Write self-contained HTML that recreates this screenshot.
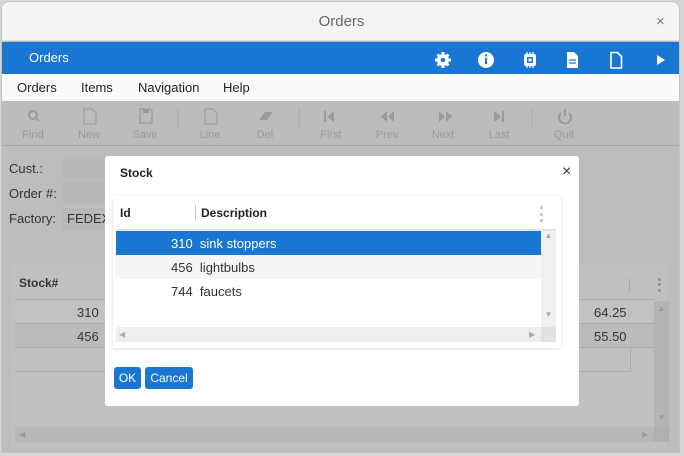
<!DOCTYPE html>
<html><head><style>
*{box-sizing:border-box;margin:0;padding:0}
body{width:684px;height:456px;background:#d6d6d6;font-family:"Liberation Sans",sans-serif;position:relative;overflow:hidden}
.a{position:absolute}
.win{left:1px;top:1px;width:679px;height:452px;border:1px solid #c4c4c4;border-radius:8px 8px 0 0;overflow:hidden;background:#bdbdbd}
.tb{color:#9a9a9a;font-size:11px;text-align:center;width:50px}
.ico{fill:#9a9a9a}
</style></head><body>
<div class="a win">
 <div class="a" style="left:0;top:0;width:679px;height:39px;background:#f4f4f4;border-bottom:1px solid #ddd"></div>
 <div class="a" style="left:0;top:11px;width:679px;text-align:center;font-size:15px;color:#666">Orders</div>
 <div class="a" style="left:654px;top:11px;font-size:15px;color:#777">×</div>
 <div class="a" style="left:0;top:40px;width:679px;height:32px;background:#1976d2"></div>
 <div class="a" style="left:27px;top:48px;font-size:13px;color:#fff">Orders</div>
 <svg class="a" style="left:430px;top:47px" width="240" height="22" fill="#fff">
  <circle cx="11" cy="11" r="6"/><g stroke="#fff" stroke-width="3"><line x1="11" y1="3" x2="11" y2="19"/><line x1="3" y1="11" x2="19" y2="11"/><line x1="5.5" y1="5.5" x2="16.5" y2="16.5"/><line x1="16.5" y1="5.5" x2="5.5" y2="16.5"/></g><circle cx="11" cy="11" r="2.2" fill="#1976d2"/>
  <circle cx="54" cy="11" r="8"/><rect x="53" y="9" width="2" height="6" fill="#1976d2"/><circle cx="54" cy="6.5" r="1.2" fill="#1976d2"/>
  <rect x="92" y="5" width="12" height="12" rx="2"/><rect x="95" y="8" width="6" height="6" fill="#1976d2"/><rect x="96.5" y="9.5" width="3" height="3"/><g stroke="#fff" stroke-width="1.2"><line x1="95" y1="3" x2="95" y2="19"/><line x1="98" y1="3" x2="98" y2="19"/><line x1="101" y1="3" x2="101" y2="19"/></g><rect x="95" y="8" width="6" height="6" fill="#1976d2"/><rect x="96.5" y="9.5" width="3" height="3"/>
  <path d="M135 3h7l4 4v12h-11z"/><g stroke="#1976d2" stroke-width="1.2"><line x1="137" y1="11" x2="144" y2="11"/><line x1="137" y1="14" x2="144" y2="14"/></g>
  <path d="M179 3.5h6.5l4 4v11.5h-10.5z" fill="none" stroke="#fff" stroke-width="1.6"/>
  <path d="M225 6l8 5-8 5z"/>
 </svg>
 <div class="a" style="left:0;top:72px;width:679px;height:27px;background:#fafafa;font-size:13px;color:#222">
  <span class="a" style="left:15px;top:6px">Orders</span><span class="a" style="left:79px;top:6px">Items</span><span class="a" style="left:136px;top:6px">Navigation</span><span class="a" style="left:221px;top:6px">Help</span>
 </div>
 <div class="a" style="left:0;top:99px;width:679px;height:45px;background:#bcbcbc;border-bottom:1px solid #a8a8a8"></div>
 <svg class="a" style="left:0;top:104px" width="679" height="22">
  <g class="ico"><circle cx="31" cy="9" r="4" fill="none" stroke="#9a9a9a" stroke-width="2"/><line x1="34" y1="12" x2="37" y2="15" stroke="#9a9a9a" stroke-width="2"/>
  <path d="M82 3h8l4 4v11h-12z" fill="none" stroke="#9a9a9a"/>
  <path d="M138 3h10l2 2v12h-12z" fill="none" stroke="#9a9a9a" stroke-width="1.3"/><rect x="141" y="3" width="6" height="4"/>
  <path d="M203 3h8l4 4v11h-12z" fill="none" stroke="#9a9a9a"/>
  <path d="M257 14l6-8h8l-6 8z"/>
  <rect x="322" y="5" width="2" height="11"/><path d="M332 5v11l-7-5.5z"/>
  <path d="M385 5v11l-6-5.5zM392 5v11l-6-5.5z"/>
  <path d="M437 5v11l6-5.5zM444 5v11l6-5.5z"/>
  <path d="M492 5v11l7-5.5z"/><rect x="500" y="5" width="2" height="11"/>
  <path d="M559 7a6 6 0 1 0 8 0" fill="none" stroke="#9a9a9a" stroke-width="2"/><line x1="563" y1="3" x2="563" y2="10" stroke="#9a9a9a" stroke-width="2"/></g>
  <g stroke="#aaa"><line x1="176" y1="2" x2="176" y2="38"/><line x1="297" y1="2" x2="297" y2="38"/><line x1="530" y1="2" x2="530" y2="38"/></g>
 </svg>
 <div class="a tb" style="left:6px;top:127px">Find</div><div class="a tb" style="left:62px;top:127px">New</div><div class="a tb" style="left:118px;top:127px">Save</div><div class="a tb" style="left:183px;top:127px">Line</div><div class="a tb" style="left:238px;top:127px">Del</div><div class="a tb" style="left:304px;top:127px">First</div><div class="a tb" style="left:360px;top:127px">Prev</div><div class="a tb" style="left:416px;top:127px">Next</div><div class="a tb" style="left:472px;top:127px">Last</div><div class="a tb" style="left:537px;top:127px">Quit</div>
 <div class="a" style="left:7px;top:159px;font-size:13px;color:#333">Cust.:</div>
 <div class="a" style="left:7px;top:184px;font-size:13px;color:#333">Order #:</div>
 <div class="a" style="left:7px;top:209px;font-size:13px;color:#333">Factory:</div>
 <div class="a" style="left:60px;top:155px;width:60px;height:22px;background:#b8b8b8;border-radius:3px;font-size:13px;color:#333;padding:3px 0 0 42px">1</div>
 <div class="a" style="left:60px;top:180px;width:60px;height:22px;background:#b8b8b8;border-radius:3px"></div>
 <div class="a" style="left:60px;top:206px;width:60px;height:22px;background:#b8b8b8;border-radius:3px;font-size:13px;color:#333;padding:3px 0 0 5px">FEDEX</div>
 <div class="a" style="left:9px;top:261px;width:656px;height:185px;background:#c0c0c0;border-radius:3px"></div>
 <div class="a" style="left:17px;top:274px;font-size:12px;font-weight:bold;color:#333">Stock#</div>
 <div class="a" style="left:13px;top:297px;width:640px;height:1px;background:#aaa"></div>
 <div class="a" style="left:13px;top:298px;width:640px;height:24px;background:#c2c2c2;border-bottom:1px solid #aaa"></div>
 <div class="a" style="left:13px;top:322px;width:640px;height:24px;background:#bbb;border-bottom:1px solid #aaa"></div>
 <div class="a" style="left:13px;top:346px;width:616px;height:24px;border-bottom:1px solid #aaa;border-right:1px solid #aaa"></div>
 <div class="a" style="left:75px;top:303px;font-size:13px;color:#333">310</div>
 <div class="a" style="left:75px;top:327px;font-size:13px;color:#333">456</div>
 <div class="a" style="left:592px;top:303px;font-size:13px;color:#333">64.25</div>
 <div class="a" style="left:592px;top:327px;font-size:13px;color:#333">55.50</div>
 <div class="a" style="left:627px;top:276px;width:1px;height:14px;background:#aaa"></div>
 <div class="a" style="left:656px;top:276px;width:3px;height:14px;border-left:3px dotted #999"></div>
 <div class="a" style="left:652px;top:299px;width:15px;height:138px;background:#b4b4b4;color:#999;font-size:8px;text-align:center;padding-top:3px">▲<div style="margin-top:100px">▼</div></div>
 <div class="a" style="left:13px;top:425px;width:639px;height:15px;background:#b8b8b8;color:#999;font-size:8px;padding:3px 0 0 4px">◀<span style="position:absolute;left:627px">▶</span></div>
 <div class="a" style="left:652px;top:425px;width:15px;height:15px;background:#b0b0b0"></div>
</div>
<div class="a" style="left:105px;top:156px;width:474px;height:250px;background:#fff;border-radius:3px">
 <div class="a" style="left:15px;top:10px;font-size:12px;font-weight:bold;color:#222">Stock</div>
 <div class="a" style="left:457px;top:7px;font-size:16px;color:#333">×</div>
 <div class="a" style="left:8px;top:40px;width:448px;height:152px;box-shadow:0 1px 4px rgba(0,0,0,.12)"></div>
 <div class="a" style="left:15px;top:50px;font-size:12px;font-weight:bold;color:#222">Id</div>
 <div class="a" style="left:90px;top:49px;width:1px;height:16px;background:#ccc"></div>
 <div class="a" style="left:96px;top:50px;font-size:12px;font-weight:bold;color:#222">Description</div>
 <div class="a" style="left:435px;top:50px;height:16px;border-left:3px dotted #ccc"></div>
 <div class="a" style="left:11px;top:73px;width:440px;height:2px;background:#e4e4e4"></div>
 <div class="a" style="left:11px;top:75px;width:425px;height:24px;background:#1976d2"></div>
 <div class="a" style="left:11px;top:99px;width:425px;height:24px;background:#f5f5f5"></div>
 <div class="a" style="left:436px;top:75px;width:15px;height:96px;background:#f0f0f0;color:#aaa;font-size:8px;text-align:center">▲<div style="margin-top:70px">▼</div></div>
 <div class="a" style="left:11px;top:171px;width:425px;height:15px;background:#eee;color:#aaa;font-size:8px;padding:3px 0 0 3px">◀<span style="position:absolute;left:413px">▶</span></div>
 <div class="a" style="left:436px;top:171px;width:15px;height:15px;background:#e2e2e2"></div>
 <div class="a" style="left:66px;top:80px;font-size:13px;color:#fff">310&nbsp; sink stoppers</div>
 <div class="a" style="left:66px;top:104px;font-size:13px;color:#333">456&nbsp; lightbulbs</div>
 <div class="a" style="left:66px;top:128px;font-size:13px;color:#333">744&nbsp; faucets</div>
 <div class="a" style="left:9px;top:211px;width:27px;height:22px;background:#1976d2;border-radius:3px;color:#fff;font-size:12px;text-align:center;padding-top:4px">OK</div>
 <div class="a" style="left:40px;top:211px;width:48px;height:22px;background:#1976d2;border-radius:3px;color:#fff;font-size:12px;text-align:center;padding-top:4px">Cancel</div>
</div>
</body></html>
